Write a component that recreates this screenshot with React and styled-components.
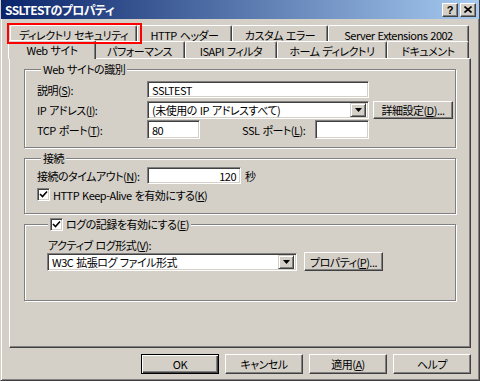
import React from 'react'
import styled, { createGlobalStyle } from 'styled-components'

const GlobalStyle = createGlobalStyle`
  html, body {
    margin: 0;
    padding: 0;
    background: #d4d0c8;
  }
  body {
    font-family: "Noto Sans CJK JP", "Liberation Sans", sans-serif;
    font-size: 11px;
    letter-spacing: -0.5px;
    word-spacing: 1px;
    font-feature-settings: "palt" 1;
    color: #000;
  }
  * {
    box-sizing: border-box;
  }
`;

const Window = styled.div`
  width: 480px;
  height: 381px;
  background: #d4d0c8;
  display: flex;
  flex-direction: column;
  border-left: 1px solid #d4d0c8;
  border-right: 1px solid #404040;
  border-bottom: 1px solid #404040;
  box-shadow: inset 1px 0 #fff, inset -1px -1px #808080;
`;

const TitleBar = styled.div`
  height: 19px;
  display: flex;
  align-items: center;
  justify-content: space-between;
  padding: 0 3px 0 4px;
  background: linear-gradient(to right, #0a246a, #a6caf0);
  color: #fff;
  font-weight: bold;
  font-size: 12px;
  letter-spacing: -0.6px;
  line-height: 14px;
`;

const TitleButtons = styled.div`
  display: flex;
  gap: 2px;
`;

const CaptionButton = styled.div`
  width: 16px;
  height: 14px;
  display: flex;
  align-items: center;
  justify-content: center;
  background: #d4d0c8;
  border: 1px solid;
  border-color: #fff #404040 #404040 #fff;
  box-shadow: inset -1px -1px #808080;
  color: #000;
  font-family: "Liberation Sans", sans-serif;
  font-size: 11px;
  font-weight: bold;
  letter-spacing: 0;
`;

const Body = styled.div`
  flex: 1;
  display: flex;
  flex-direction: column;
  padding: 6px 8px 0 8px;
`;

const TabStrip = styled.div`
  display: flex;
  flex-direction: column;
  padding-left: 1px;
`;

const TabRow = styled.div`
  display: flex;
  align-items: flex-end;
  height: ${p => p.$h}px;
`;

const Tab = styled.div`
  position: relative;
  flex: none;
  width: ${p => p.$w + (p.$sel ? 4 : 0)}px;
  height: ${p => (p.$sel ? 19 : 17)}px;
  margin: 0 ${p => (p.$sel ? -2 : 0)}px ${p => (p.$sel ? -1 : 0)}px;
  z-index: ${p => (p.$sel ? 2 : 'auto')};
  display: flex;
  align-items: center;
  justify-content: center;
  padding-top: ${p => (p.$sel ? 0 : 1)}px;
  background: #d4d0c8;
  border-top: 1px solid #fff;
  border-left: 1px solid #fff;
  border-right: 1px solid #404040;
  border-radius: 2px 2px 0 0;
  box-shadow: inset -1px 0 #808080;
  white-space: nowrap;
  line-height: 14px;

  ${p => p.$marked && `
    &::after {
      content: '';
      position: absolute;
      top: -3px;
      left: -4px;
      right: -6px;
      bottom: -2px;
      border: 2px solid #f00;
      z-index: 5;
    }
  `}
`;

const Panel = styled.div`
  height: 290px;
  display: flex;
  flex-direction: column;
  gap: 10px;
  padding: 10px 14px 0 14px;
  border: 1px solid;
  border-color: #fff #404040 #404040 #fff;
  box-shadow: inset -1px -1px #808080;
`;

const Group = styled.div`
  height: ${p => p.$h}px;
  flex: none;
  display: flex;
  flex-direction: column;
  padding: 0 12px;
  border: 1px solid #808080;
  box-shadow: inset 1px 1px #fff, 1px 1px #fff;
`;

const Legend = styled.div`
  align-self: flex-start;
  display: flex;
  align-items: center;
  gap: 3px;
  height: 14px;
  line-height: 14px;
  margin: -8px 0 0 ${p => p.$offset}px;
  padding: 0 2px;
  background: #d4d0c8;
`;

const Rows = styled.div`
  display: flex;
  flex-direction: column;
  gap: ${p => p.$gap}px;
  margin-top: ${p => p.$top}px;
`;

const Row = styled.div`
  display: flex;
  align-items: center;
  height: 19px;
`;

const Label = styled.span`
  flex: none;
  width: ${p => (p.$w ? `${p.$w}px` : 'auto')};
  margin-left: ${p => p.$ml || 0}px;
  white-space: nowrap;
  line-height: 14px;
`;

const Field = styled.div`
  flex: none;
  width: ${p => p.$w}px;
  height: ${p => p.$h || 18}px;
  display: flex;
  align-items: center;
  justify-content: ${p => (p.$right ? 'flex-end' : 'flex-start')};
  padding: 0 4px;
  background: #fff;
  border: 1px solid;
  border-color: #808080 #fff #fff #808080;
  box-shadow: inset 1px 1px #404040, inset -1px -1px #d4d0c8;
  white-space: nowrap;
  line-height: 14px;
`;

const Select = styled(Field)`
  justify-content: space-between;
  padding: 0 2px 0 4px;
`;

const DropButton = styled.div`
  width: 16px;
  height: 14px;
  display: flex;
  align-items: center;
  justify-content: center;
  background: #d4d0c8;
  border: 1px solid;
  border-color: #d4d0c8 #404040 #404040 #d4d0c8;
  box-shadow: inset 1px 1px #fff, inset -1px -1px #808080;
`;

const Button = styled.div`
  flex: none;
  width: ${p => p.$w}px;
  height: ${p => p.$h || 19}px;
  margin-left: ${p => p.$ml || 0}px;
  display: flex;
  align-items: center;
  justify-content: center;
  background: #d4d0c8;
  border: 1px solid;
  border-color: ${p => (p.$default ? '#000' : '#fff #404040 #404040 #fff')};
  box-shadow: ${p =>
    p.$default
      ? 'inset 1px 1px #fff, inset -1px -1px #404040, inset -2px -2px #808080'
      : 'inset -1px -1px #808080'};
  white-space: nowrap;
  line-height: 14px;
`;

const Box = styled.div`
  flex: none;
  width: 13px;
  height: 13px;
  display: flex;
  align-items: center;
  justify-content: center;
  background: #fff;
  border: 1px solid;
  border-color: #808080 #fff #fff #808080;
  box-shadow: inset 1px 1px #404040, inset -1px -1px #d4d0c8;
`;

const Indented = styled.div`
  display: flex;
  flex-direction: column;
  margin-top: 7px;
  padding-left: ${p => p.$pl}px;
`;

const ButtonBar = styled.div`
  display: flex;
  justify-content: flex-end;
  gap: 6px;
  margin-top: 6px;
`;

const Arrow = () => (
  <svg width="7" height="4" viewBox="0 0 7 4">
    <path d="M0 0 H7 L3.5 4 Z" fill="#000" />
  </svg>
);

const Check = () => (
  <svg width="9" height="9" viewBox="0 0 9 9">
    <path d="M1 4 L3.5 6.5 L8 1.5" fill="none" stroke="#000" strokeWidth="1.6" />
  </svg>
);

const Checkbox = () => (
  <Box>
    <Check />
  </Box>
);

const rowOne = [
  { label: 'ディレクトリ セキュリティ', w: 127, marked: true },
  { label: 'HTTP ヘッダー', w: 95 },
  { label: 'カスタム エラー', w: 96 },
  { label: 'Server Extensions 2002', w: 141 },
];

const rowTwo = [
  { label: 'Web サイト', w: 84, sel: true },
  { label: 'パフォーマンス', w: 91 },
  { label: 'ISAPI フィルタ', w: 92 },
  { label: 'ホーム ディレクトリ', w: 110 },
  { label: 'ドキュメント', w: 82 },
];

export default function App() {
  return (
    <>
      <GlobalStyle />
      <Window>
        <TitleBar>
          <span>SSLTESTのプロパティ</span>
          <TitleButtons>
            <CaptionButton>?</CaptionButton>
            <CaptionButton>
              <svg width="8" height="7" viewBox="0 0 8 7">
                <path d="M0.5 0.5 L7.5 6.5 M7.5 0.5 L0.5 6.5" stroke="#000" strokeWidth="1.6" />
              </svg>
            </CaptionButton>
          </TitleButtons>
        </TitleBar>

        <Body>
          <TabStrip>
            <TabRow $h={17}>
              {rowOne.map(t => (
                <Tab key={t.label} $w={t.w} $marked={t.marked}>{t.label}</Tab>
              ))}
            </TabRow>
            <TabRow $h={16}>
              {rowTwo.map(t => (
                <Tab key={t.label} $w={t.w} $sel={t.sel}>{t.label}</Tab>
              ))}
            </TabRow>
          </TabStrip>

          <Panel>
            <Group $h={79}>
              <Legend $offset={4}>Web サイトの識別</Legend>
              <Rows $gap={1} $top={4}>
                <Row>
                  <Label $w={110}>説明(<u>S</u>):</Label>
                  <Field $w={222} $h={17}>SSLTEST</Field>
                </Row>
                <Row>
                  <Label $w={110}>IP アドレス(<u>I</u>):</Label>
                  <Select $w={222} $h={18}>
                    <span>(未使用の IP アドレスすべて)</span>
                    <DropButton><Arrow /></DropButton>
                  </Select>
                  <Button $w={80} $h={18} $ml={4}>詳細設定(<u>D</u>)...</Button>
                </Row>
                <Row>
                  <Label $w={110}>TCP ポート(<u>T</u>):</Label>
                  <Field $w={53} $h={19}>80</Field>
                  <Label $w={73} $ml={42}>SSL ポート(<u>L</u>):</Label>
                  <Field $w={54} $h={19} />
                </Row>
              </Rows>
            </Group>

            <Group $h={56}>
              <Legend $offset={4}>接続</Legend>
              <Rows $gap={0} $top={1}>
                <Row>
                  <Label $w={110}>接続のタイムアウト(<u>N</u>):</Label>
                  <Field $w={94} $h={17} $right>120</Field>
                  <Label $ml={4}>秒</Label>
                </Row>
                <Row>
                  <Checkbox />
                  <Label $ml={3}>HTTP Keep-Alive を有効にする(<u>K</u>)</Label>
                </Row>
              </Rows>
            </Group>

            <Group $h={77}>
              <Legend $offset={11}>
                <Checkbox />
                <span>ログの記録を有効にする(<u>E</u>)</span>
              </Legend>
              <Indented $pl={10}>
                <Label $ml={1}>アクティブ ログ形式(<u>V</u>):</Label>
                <Row>
                  <Select $w={250} $h={18}>
                    <span>W3C 拡張ログ ファイル形式</span>
                    <DropButton><Arrow /></DropButton>
                  </Select>
                  <Button $w={79} $h={19} $ml={7}>プロパティ(<u>P</u>)...</Button>
                </Row>
              </Indented>
            </Group>
          </Panel>

          <ButtonBar>
            <Button $w={78} $h={20} $default>OK</Button>
            <Button $w={78} $h={20}>キャンセル</Button>
            <Button $w={78} $h={20}>適用(<u>A</u>)</Button>
            <Button $w={78} $h={20}>ヘルプ</Button>
          </ButtonBar>
        </Body>
      </Window>
    </>
  );
}
